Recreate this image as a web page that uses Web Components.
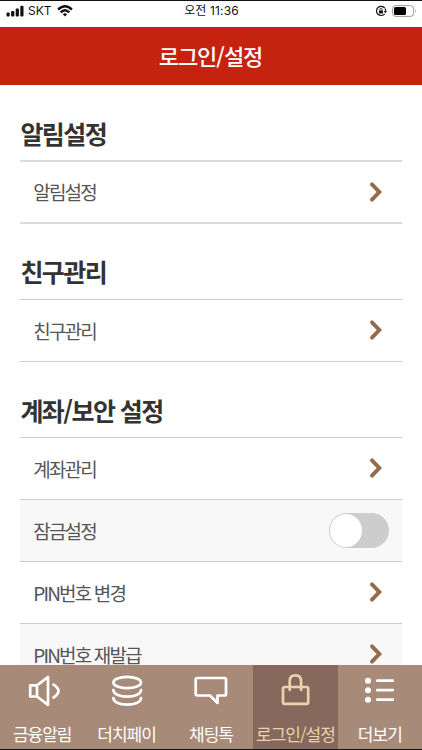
<!DOCTYPE html>
<html lang="ko"><head><meta charset="utf-8"><title>로그인/설정</title>
<style>html,body{margin:0;height:100%;background:#fff}body{font-family:"Noto Sans CJK KR",sans-serif;overflow:hidden}</style></head>
<body><settings-app></settings-app>
<script>
const define=(name,html,setup)=>customElements.define(name,class extends HTMLElement{
 connectedCallback(){ if(this.shadowRoot)return; this.attachShadow({mode:'open'}).innerHTML=html; if(setup)setup(this,this.shadowRoot); }
});

define('status-bar',`<style>
:host{display:grid;grid-template-columns:1fr auto 1fr;align-items:center;height:27px;box-sizing:border-box;border-top:1px solid #111;padding:0 5px 7px 6px;background:#fff;color:#111;font:12px/18px Inter,"Noto Sans CJK KR",sans-serif}
div{display:flex;align-items:center}svg{display:block}.r{justify-content:flex-end;gap:5px}.c{white-space:pre;letter-spacing:.15px}.l span{margin:0 5px 0 4px}
</style>
<div class="l"><svg width="18" height="12" viewBox="0 0 18 12" fill="#111"><rect x=".5" y="7.5" width="3.2" height="4" rx="1"/><rect x="5.1" y="6" width="3.2" height="5.5" rx="1"/><rect x="9.7" y="3.5" width="3.2" height="8" rx="1"/><rect x="14.3" y=".7" width="3.2" height="10.8" rx="1"/></svg><span>SKT</span>
<svg width="16" height="12" viewBox="0 0 16 12" fill="none" stroke="#111" stroke-width="2.4"><path d="M1.1 4.7Q8-2 14.9 4.7M3.7 7.4Q8 3.1 12.3 7.4"/><path d="M8 11.5L5.8 9.2Q8 7.4 10.2 9.2Z" fill="#111" stroke="none"/></svg></div>
<div class="c">오전 11:36</div>
<div class="r"><svg width="12" height="12" viewBox="0 0 12 12" fill="none" stroke="#111"><path d="M9.7 3A4.6 4.6 0 1 0 9.7 8.8" stroke-width="1.2"/><path d="M10.1 3.5a4.6 4.6 0 0 1 .4 3.1" stroke-width="1.2"/><path d="M8.8 5.9h3.1l-1.6 2.3z" fill="#111" stroke="none"/><rect x="4" y="5.5" width="4" height="3" fill="#111" stroke="none"/><path d="M4.8 5.7V4.6a1.2 1.2 0 0 1 2.4 0v1.1" stroke-width=".8"/></svg>
<svg width="25" height="12" viewBox="0 0 25 12"><rect x=".6" y=".6" width="21" height="10.8" rx="3" fill="none" stroke="#999"/><rect x="2" y="2" width="12" height="8" rx="1.5" fill="#000"/><path d="M23 4q1.8 2 0 4z" fill="#999"/></svg></div>`);

define('title-bar',`<style>:host{display:flex;height:58px;align-items:center;justify-content:center;background:#c62210;color:#fff;font-size:22px;line-height:30px;font-weight:500;letter-spacing:-1.05px;box-sizing:border-box;padding:0 1px 3px 0}</style><slot></slot>`);

define('settings-section',`<style>
:host{display:block;padding:0 20px}
h2{margin:0;height:75.3px;box-sizing:border-box;padding:29px 0 0 .4px;font-size:25px;line-height:38px;font-weight:700;letter-spacing:-1.55px;color:#333}
.rows{border-top:1px solid var(--rule,#ccc);box-shadow:inset 0 1px var(--rule-soft,transparent)}
</style><h2></h2><div class="rows"><slot></slot></div>`,(h,r)=>r.querySelector('h2').textContent=h.getAttribute('heading'));

define('settings-row',`<style>
:host{display:flex;height:62px;box-sizing:border-box;border-bottom:1px solid var(--rule,#ccc);box-shadow:0 1px var(--rule-soft,transparent);align-items:center;justify-content:space-between;padding:1px 19px 0 13.3px;color:#555;font-size:19px;line-height:18px;letter-spacing:-1.85px}
:host([shaded]){background:#f8f8f8}:host([toggle]){padding-right:13px}
svg{display:block;margin-bottom:1px}
</style><span><slot></slot></span><span class="end"></span>`,(h,r)=>{r.querySelector('.end').innerHTML=h.hasAttribute('toggle')?'<toggle-switch></toggle-switch>':'<svg width="14" height="22" viewBox="0 0 14 22" fill="none" stroke="#946b47" stroke-width="3.9" stroke-linecap="round"><path d="M3 3.4L10.3 11L3 18.6"/></svg>'});

define('toggle-switch',`<style>:host{display:block;width:60px;height:35px;box-sizing:border-box;border-radius:18px;background:#cdcdcd;padding:1px}i{display:block;width:32px;height:33px;border-radius:50%;background:#fff}</style><i></i>`);

const icons={
sound:'<path d="M5.2 11.3H12v11.2H5.2zM12 11.3L23 3v27.8L12 22.5M28.5 10.7q10 6.3 0 12.8"/>',
coins:'<ellipse cx="17.2" cy="8.5" rx="13.8" ry="5.7"/><path d="M3.4 16c0 8.7 27.6 8.7 27.6 0M3.4 24c0 8.8 27.6 8.8 27.6 0"/>',
chat:'<path d="M3.2 4h27.3q1.5 0 1.5 1.5v14.5q0 1.5-1.5 1.5H23.5V29L16 21.5h-12.8Q1.7 21.5 1.7 20v-14.5Q1.7 4 3.2 4z"/>',
bag:'<rect x="5" y="13" width="25.2" height="16.8" rx="1.5"/><path d="M11.7 16V7q0-5.7 5.7-5.7T23.1 7v9"/>',
list:'<g fill="currentColor" stroke="none"><circle cx="5" cy="6.7" r="3"/><circle cx="5" cy="16.2" r="3"/><circle cx="5" cy="25.7" r="3"/></g><path d="M14.3 6.7h15.5M14.3 16.2h15.5M14.3 25.7h15.5"/>'};
define('nav-item',`<style>:host{display:flex;flex:1 1 0;min-width:0;flex-direction:column;align-items:center;padding-top:9px;box-sizing:border-box;color:#fff;font-size:17px;line-height:24px;letter-spacing:-1px;white-space:nowrap}
:host([active]){background:#86695c;color:#ead3ac}svg{display:block;overflow:visible}span{margin-top:14px}</style>
<svg width="34" height="34" viewBox="0 0 34 34" fill="none" stroke="currentColor" stroke-width="2.7" stroke-linecap="round" stroke-linejoin="round"></svg><span><slot></slot></span>`,(h,r)=>r.querySelector('svg').innerHTML=icons[h.getAttribute('icon')]);
define('bottom-nav',`<style>:host{display:flex;height:85px;box-sizing:border-box;border-bottom:1px solid #111;background:#a88a79}</style><slot></slot>`);

define('settings-app',`<style>:host{display:flex;flex-direction:column;width:422px;height:750px}main{flex:1;min-height:0;overflow:hidden}status-bar,title-bar,bottom-nav{flex-shrink:0}.soft{--rule:#dcdcdc;--rule-soft:#dcdcdc}</style>
<status-bar></status-bar><title-bar>로그인/설정</title-bar>
<main><settings-section class="soft" heading="알림설정"><settings-row>알림설정</settings-row></settings-section>
<settings-section heading="친구관리"><settings-row>친구관리</settings-row></settings-section>
<settings-section heading="계좌/보안 설정"><settings-row>계좌관리</settings-row><settings-row shaded toggle>잠금설정</settings-row><settings-row>PIN번호 변경</settings-row><settings-row shaded>PIN번호 재발급</settings-row></settings-section></main>
<bottom-nav><nav-item icon="sound">금융알림</nav-item><nav-item icon="coins">더치페이</nav-item><nav-item icon="chat">채팅톡</nav-item><nav-item icon="bag" active>로그인/설정</nav-item><nav-item icon="list">더보기</nav-item></bottom-nav>`);
</script></body></html>
